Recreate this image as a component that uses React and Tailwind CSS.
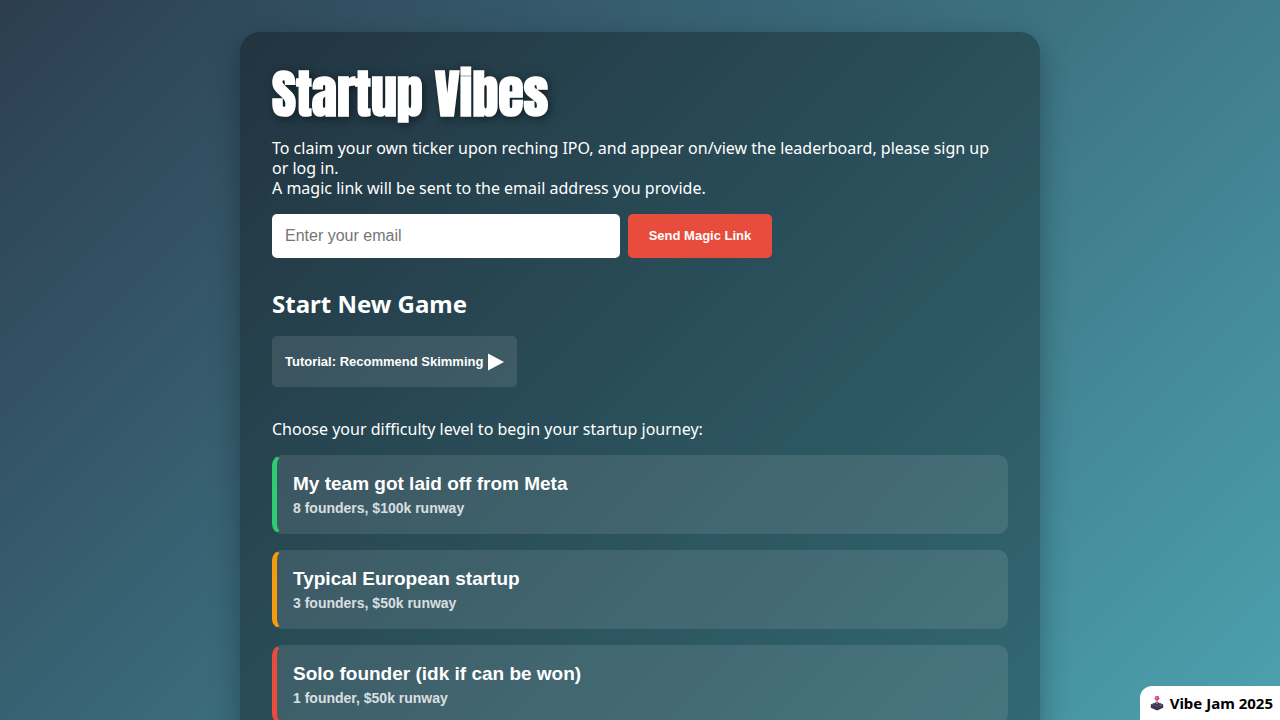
const levels = [
  { title: "My team got laid off from Meta", detail: "8 founders, $100k runway", edge: "border-l-[#2ecc71]" },
  { title: "Typical European startup", detail: "3 founders, $50k runway", edge: "border-l-[#f39c12]" },
  { title: "Solo founder (idk if can be won)", detail: "1 founder, $50k runway", edge: "border-l-[#e74c3c]" },
];

function Joystick() {
  return (
    <svg viewBox="0 0 14 16" className="h-4 w-3.5" aria-hidden="true">
      <path d="M.8 9.5 7 7l6.2 2.5v3.2L7 15.6.8 12.7z" fill="#3c3550" />
      <path d="M.8 9.5 7 7l6.2 2.5L7 12.3z" fill="#554c6c" />
      <ellipse cx="7" cy="9.5" rx="2.4" ry="1.1" fill="#2d2640" />
      <path d="M6.3 4h1.4v5.5H6.3z" fill="#a7799f" />
      <circle cx="7" cy="3.2" r="2.4" fill="#e0457b" />
      <circle cx="6.4" cy="2.6" r="0.9" fill="#f58ab0" />
      <path d="m9.5 10.4 1.3-.6 1 .4-1.3.6z" fill="#d23f6c" />
    </svg>
  );
}

export default function App() {
  return (
    <div className="min-h-screen bg-[linear-gradient(135deg,#2c3e50,#4ca1af)] bg-fixed px-4 py-8 font-['Noto_Sans','Open_Sans',sans-serif] text-white">
      <main className="mx-auto max-w-[800px] rounded-[20px] bg-black/30 p-8 shadow-[0_10px_30px_rgba(0,0,0,0.3)]">
        <h1 className="text-[52px] leading-[60px] font-black font-['Anton','Roboto_Condensed',sans-serif] [text-shadow:2px_2px_8px_rgba(0,0,0,0.5)]">
          Startup Vibes
        </h1>

        <p className="mt-3.5 text-base leading-5">
          To claim your own ticker upon reching IPO, and appear on/view the leaderboard, please sign up
          <br />
          or log in.
          <br />A magic link will be sent to the email address you provide.
        </p>

        <form className="mt-4 flex max-w-[500px] gap-2" onSubmit={(e) => e.preventDefault()}>
          <input
            type="email"
            aria-label="Email address"
            placeholder="Enter your email"
            className="h-11 min-w-0 flex-1 rounded-[5px] bg-white px-[13px] font-['Liberation_Sans',sans-serif] text-base text-black placeholder:text-[#757575]"
          />
          <button
            type="submit"
            className="h-11 w-36 rounded-[5px] bg-[#e74c3c] font-['Liberation_Sans',sans-serif] text-[13px] font-bold"
          >
            Send Magic Link
          </button>
        </form>

        <h2 className="mt-7 text-2xl leading-9 font-bold">Start New Game</h2>

        <button
          type="button"
          className="mt-3.5 flex h-[51px] items-center gap-1 rounded-[5px] bg-white/10 px-[13px] font-['Liberation_Sans',sans-serif] text-[13px] font-bold"
        >
          Tutorial: Recommend Skimming
          <svg viewBox="0 0 17 18" className="h-[18px] w-[17px]" aria-hidden="true">
            <path d="M1 .5v17l16-8.5z" fill="white" />
          </svg>
        </button>

        <p className="mt-8 text-base leading-5">Choose your difficulty level to begin your startup journey:</p>

        <div className="mt-4 flex flex-col gap-4">
          {levels.map((level) => (
            <button
              key={level.title}
              type="button"
              className={`flex h-[79px] flex-col rounded-[10px] border-2 border-l-[5px] border-transparent bg-white/10 px-4 pt-[15px] text-left font-['Liberation_Sans',sans-serif] font-bold ${level.edge}`}
            >
              <span className="text-[19px] leading-6">{level.title}</span>
              <span className="mt-0.5 text-sm leading-5 opacity-80">{level.detail}</span>
            </button>
          ))}
        </div>
      </main>

      <a
        href="#vibe-jam"
        className="fixed right-0 bottom-0 flex items-center gap-1.5 rounded-tl-xl bg-white py-1.5 pr-[7px] pl-2.5 text-[15px] leading-[22px] font-bold text-black"
      >
        <Joystick />
        Vibe Jam 2025
      </a>
    </div>
  );
}
